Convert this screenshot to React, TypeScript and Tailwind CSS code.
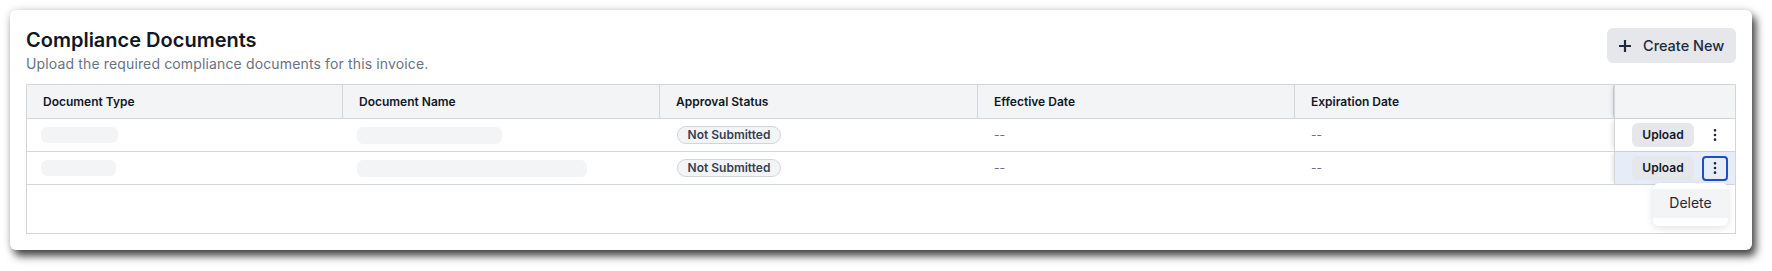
import React from 'react';
import { EllipsisVertical } from 'lucide-react';

const cols = 'grid grid-cols-[316px_317px_318px_317px_319px_1fr]';

const rows = [
  { typeW: 'w-[77px]', nameW: 'w-[145px]', open: false },
  { typeW: 'w-[75px]', nameW: 'w-[230px]', open: true },
];

const headers = ['Document Type', 'Document Name', 'Approval Status', 'Effective Date', 'Expiration Date'];

const PlusIcon = () => (
  <svg width="12" height="12" viewBox="0 0 12 12" fill="none" stroke="#1f2937" strokeWidth="2.2" strokeLinecap="butt">
    <path d="M6 0v12M0 6h12" />
  </svg>
);

const App: React.FC = () => {
  return (
    <div className="min-h-screen bg-white pt-[10px] pl-[10px] font-['Inter',sans-serif]">
      <div className="w-[1742px] rounded-md bg-white p-4 pr-4 shadow-[4px_6px_9px_rgba(0,0,0,0.72),0_0_8px_rgba(0,0,0,0.14)]">
        <div className="flex items-start justify-between">
          <div>
            <h2 className="text-xl leading-7 font-semibold text-gray-900">Compliance Documents</h2>
            <p className="text-sm leading-5 tracking-[0.01em] text-gray-500">Upload the required compliance documents for this invoice.</p>
          </div>
          <button className="mt-[2px] flex h-[35px] w-[129px] items-center gap-3 rounded-md bg-gray-200 pl-3 text-[14.5px] font-medium text-gray-800">
            <PlusIcon />
            Create New
          </button>
        </div>

        <div className="mt-[10px] border border-gray-300">
          <div className={`${cols} h-[34px] border-b border-gray-300 bg-gray-100`}>
            {headers.map((h) => (
              <div key={h} className="flex items-center border-r border-gray-300 pl-4 text-xs font-semibold text-gray-900 last:border-r-0">
                {h}
              </div>
            ))}
            <div className="border-l border-gray-300 shadow-[-4px_0_4px_-2px_rgba(0,0,0,0.1)]"></div>
          </div>

          {rows.map((r, i) => (
            <div key={i} className={`${cols} h-[33px] border-b border-gray-300`}>
              <div className="flex items-center pl-[14px]">
                <div className={`h-[16px] ${r.typeW} rounded-md bg-gray-100`}></div>
              </div>
              <div className="flex items-center pl-[14px]">
                <div className={`h-[17px] ${r.nameW} rounded-md bg-gray-100`}></div>
              </div>
              <div className="flex items-center pl-[17px]">
                <span className="flex h-[18px] w-[104px] items-center justify-center rounded-full border border-gray-300 bg-gray-100 text-xs font-semibold text-gray-700">
                  Not Submitted
                </span>
              </div>
              <div className="flex items-center pl-4 text-xs text-gray-500">--</div>
              <div className="flex items-center pl-4 text-xs text-gray-500">--</div>
              <div
                className={`flex items-center justify-end gap-2 border-l border-gray-300 pr-[7px] shadow-[-4px_0_4px_-2px_rgba(0,0,0,0.1)] ${
                  r.open ? 'bg-[#e7edf8]' : 'bg-white'
                }`}
              >
                <button className="flex h-6 w-[62px] items-center justify-center rounded-md bg-gray-200 text-xs font-semibold text-gray-900">
                  Upload
                </button>
                <div className="relative">
                  <button
                    className={`flex h-[25px] w-[26px] items-center justify-center rounded-[4px] border-2 ${
                      r.open ? 'border-[#1f4fbf]' : 'border-transparent'
                    }`}
                  >
                    <EllipsisVertical size={16} strokeWidth={2} className="text-gray-800" />
                  </button>
                  {r.open && (
                    <div className="absolute right-0 top-full z-10 mt-[2px] w-[75px] rounded-md bg-white pt-[6px] pb-[8px] shadow-[0_2px_8px_rgba(0,0,0,0.12)]">
                      <div className="flex h-[29px] items-center justify-center bg-gray-100 text-sm text-gray-800">Delete</div>
                    </div>
                  )}
                </div>
              </div>
            </div>
          ))}

          <div className="h-[48px]"></div>
        </div>
      </div>
    </div>
  );
};

export default App;
